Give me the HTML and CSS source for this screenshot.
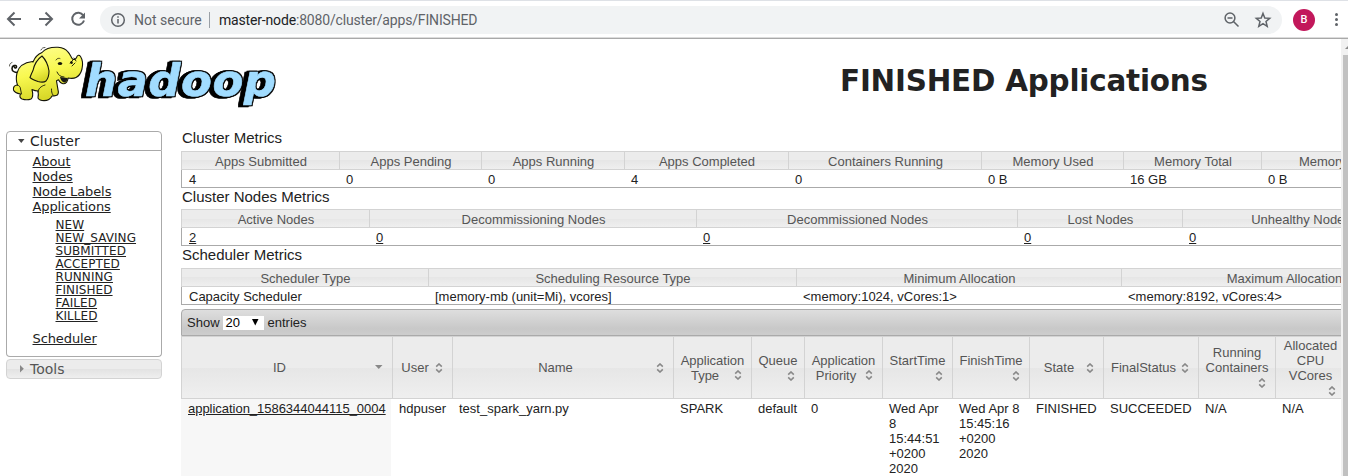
FILE: index.html
```html
<!DOCTYPE html>
<html lang="en">
<head>
<meta charset="utf-8">
<title>FINISHED Applications</title>
<link rel="stylesheet" href="styles.css">
</head>
<body>
<svg class="defs" width="0" height="0">
  <symbol id="sort" viewBox="0 0 8 10"><path d="M1.2 3.6 4 1l2.8 2.6M1.2 6.4 4 9l2.8-2.6" fill="none" stroke="#888" stroke-width="1.6"/></symbol>
</svg>
<div class="browser">
  <svg class="nav-icons" width="100" height="37" viewBox="0 0 100 37" fill="none" stroke="#5f6368" stroke-width="2">
    <path d="M21 18H8.500M14.500 11.500 8 18l6.500 6.500"/>
    <path d="M39 18h12.500M45.500 11.500 52 18l-6.500 6.500"/>
    <path d="M83.300 14.500A6 6 0 1 0 84 19.500"/>
    <path d="M85 11.500v6h-6z" fill="#5f6368" stroke="none"/>
  </svg>
  <div class="omnibox">
    <svg width="16" height="16" viewBox="0 0 16 16" fill="none" stroke="#5f6368" stroke-width="1.500"><circle cx="8" cy="8" r="6.300"/><path d="M8 7v4.500M8 4.200v1.600"/></svg>
    <span class="secure">Not secure</span>
    <span class="bar"></span>
    <span class="url"><b>master-node</b>:8080/cluster/apps/FINISHED</span>
    <svg class="tools" width="56" height="20" viewBox="0 0 56 20" fill="none" stroke="#5f6368" stroke-width="1.500">
      <circle cx="7" cy="8" r="4.900"/><path d="M4.500 8h5M10.500 11.500l5 5" />
      <path d="m40 3.400 1.800 4.600 4.900.3-3.700 3.200 1.200 4.900-4.200-2.700-4.200 2.700 1.200-4.900-3.700-3.200 4.900-.3z"/>
    </svg>
  </div>
  <span class="avatar">B</span>
  <span class="menu"><i></i><i></i><i></i></span>
</div>
<div class="viewport">
  <div class="page">
    <header class="top">
      <svg class="logo" width="290" height="80" viewBox="0 38 290 80">
        <defs>
          <linearGradient id="skin" x1="0" y1="0" x2=".3" y2="1"><stop offset="0" stop-color="#ffff98"/><stop offset=".55" stop-color="#f8f850"/><stop offset="1" stop-color="#d8d828"/></linearGradient>
          <filter id="extrude" filterUnits="userSpaceOnUse" x="70" y="50" width="220" height="65" color-interpolation-filters="sRGB">
            <feMorphology in="SourceAlpha" operator="dilate" radius="1" result="edge"/>
            <feOffset in="edge" dx="-2" dy="0" result="back1"/>
            <feOffset in="edge" dx="-4" dy="1" result="back2"/>
            <feMerge><feMergeNode in="back2"/><feMergeNode in="back1"/><feMergeNode in="edge"/><feMergeNode in="SourceGraphic"/></feMerge>
          </filter>
        </defs>
        <text class="word" x="85" y="96" textLength="191" filter="url(#extrude)">hadoop</text>
        <g stroke="#15150a" stroke-width="1.100" fill="url(#skin)" stroke-linejoin="round" stroke-linecap="round">
          <path d="M17.500 72.500c-3 0-5.500-1.500-5.500-4 0-3 4-4 4.500-2 .3 1.500-1.500 2-2 .8" fill="none" stroke-width="1.600"/>
          <path d="M33 62C35 57 38 54 42 52.500 46 48 52 47 58 47.300c5 .5 8 2 10 4.700 2 2 3 5 4.500 7 1.500 1 3 .5 4-1.500 1-3 3-2.500 4-1 2 3 2.500 8 1.500 12.500-1 4-3 7-6 8.500-2 1-5 1-8 .5 0 3-2 6-5 5.800-2-.3-3.500-2-4.500-4l-2 1 1.500 9c1 3 0 5.500-2 5.700-2 .5-3 .5-4 .5-2 4-6 5-10 4.500-2-.5-4-1-4-3 .5-2 .5-4 0-6.500-2 0-4-.5-6-1.500 1 4 1 8-1 9.500-2.500 1-6 1-9 0-2-1-2.500-3-1.500-5-3-.5-6-1.500-7-4-.5-3 1-5 4-5-1.500-4-1.500-8-.5-12 1.500-6 7-10.500 15.500-11.500z"/>
          <path d="M42 56c3 3 6 8 7 15 0 4-.5 7-3 10-2 1.500-6 1-8 .5-3-1-6-2-8-4 1-3 2-5 3-7 1-5 4-11 9-14.500z"/>
          <path d="M38 92c0-3 3-6 7-7M17 85c2 0 3.500 2 3.500 4l1 5M53 95c-1.500-2-1.500-4-1.500-6M70 63l3-3M72 66l3-3M74 58l2 3M57 72c1 3 4 5 7 5" fill="none" stroke-width=".9"/>
          <path d="M60 77c2 0 5 1 7.500 1 0 2-1 4.500-3.500 4.500-2-.5-3.500-3-4-5.500z" fill="#171718" stroke="none"/>
          <ellipse cx="60" cy="63.500" rx="2.200" ry="1.500" fill="#15150a" stroke="none"/><ellipse cx="71.500" cy="62.500" rx="1.300" ry="1.600" fill="#15150a" stroke="none"/>
          <path d="M56 60c1-2 3-2 4-1.500M9.500 66c0-2 1-3 2.500-3.500M41 50c1-2 2-2.500 4-2.500" fill="none" stroke-width=".7"/>
        </g>
      </svg>
      <h1>FINISHED Applications</h1>
    </header>
    <div class="columns">
      <nav class="side">
        <div class="acc-head open"><svg width="8" height="5" viewBox="0 0 8 5"><path d="M1 0h6.500L4.250 4z" fill="#454545"/></svg>Cluster</div>
        <div class="acc-body">
          <a>About</a><a>Nodes</a><a>Node Labels</a><a>Applications</a>
          <div class="sub"><a>NEW</a><a>NEW_SAVING</a><a>SUBMITTED</a><a>ACCEPTED</a><a>RUNNING</a><a>FINISHED</a><a>FAILED</a><a>KILLED</a></div>
          <a>Scheduler</a>
        </div>
        <div class="acc-head closed"><svg width="8" height="8" viewBox="0 0 8 8"><path d="M3 0v7.500L6.800 3.750z" fill="#888"/></svg>Tools</div>
      </nav>
      <main class="main">
        <h3>Cluster Metrics</h3>
        <div class="metrics m1">
          <div class="th">Apps Submitted</div><div class="th">Apps Pending</div><div class="th">Apps Running</div><div class="th">Apps Completed</div><div class="th">Containers Running</div><div class="th">Memory Used</div><div class="th">Memory Total</div><div class="th">Memory Reserved</div>
          <div class="td">4</div><div class="td">0</div><div class="td">0</div><div class="td">4</div><div class="td">0</div><div class="td">0 B</div><div class="td">16 GB</div><div class="td">0 B</div>
        </div>
        <h3>Cluster Nodes Metrics</h3>
        <div class="metrics m2">
          <div class="th">Active Nodes</div><div class="th">Decommissioning Nodes</div><div class="th">Decommissioned Nodes</div><div class="th">Lost Nodes</div><div class="th">Unhealthy Nodes</div>
          <div class="td"><a>2</a></div><div class="td"><a>0</a></div><div class="td"><a>0</a></div><div class="td"><a>0</a></div><div class="td"><a>0</a></div>
        </div>
        <h3>Scheduler Metrics</h3>
        <div class="metrics m3">
          <div class="th">Scheduler Type</div><div class="th">Scheduling Resource Type</div><div class="th">Minimum Allocation</div><div class="th">Maximum Allocation</div>
          <div class="td">Capacity Scheduler</div><div class="td">[memory-mb (unit=Mi), vcores]</div><div class="td">&lt;memory:1024, vCores:1&gt;</div><div class="td">&lt;memory:8192, vCores:4&gt;</div>
        </div>
        <div class="length">Show <span class="select">20<svg width="7" height="7" viewBox="0 0 7 7"><path d="M0 0h6.500L3.250 6.500z"/></svg></span> entries</div>
        <div class="apps">
          <div class="th side-sort"><span>ID</span><svg width="8" height="5" viewBox="0 0 8 5"><path d="M0 0h7.500L3.750 4z" fill="#888"/></svg></div>
          <div class="th side-sort"><span>User</span><svg class="s"><use href="#sort"/></svg></div>
          <div class="th side-sort"><span>Name</span><svg class="s"><use href="#sort"/></svg></div>
          <div class="th two"><span>Application</span><div class="side-sort"><span>Type</span><svg class="s"><use href="#sort"/></svg></div></div>
          <div class="th below"><span>Queue</span><svg class="s"><use href="#sort"/></svg></div>
          <div class="th two"><span>Application</span><div class="side-sort"><span>Priority</span><svg class="s"><use href="#sort"/></svg></div></div>
          <div class="th below"><span>StartTime</span><svg class="s"><use href="#sort"/></svg></div>
          <div class="th below"><span>FinishTime</span><svg class="s"><use href="#sort"/></svg></div>
          <div class="th side-sort"><span>State</span><svg class="s"><use href="#sort"/></svg></div>
          <div class="th side-sort"><span>FinalStatus</span><svg class="s"><use href="#sort"/></svg></div>
          <div class="th below"><span>Running<br>Containers</span><svg class="s"><use href="#sort"/></svg></div>
          <div class="th below"><span>Allocated<br>CPU<br>VCores</span><svg class="s"><use href="#sort"/></svg></div>
          <div class="td sorted"><a>application_1586344044115_0004</a></div>
          <div class="td">hdpuser</div><div class="td">test_spark_yarn.py</div><div class="td">SPARK</div><div class="td">default</div><div class="td">0</div>
          <div class="td">Wed Apr<br>8<br>15:44:51<br>+0200<br>2020</div><div class="td">Wed Apr 8<br>15:45:16<br>+0200<br>2020</div>
          <div class="td">FINISHED</div><div class="td">SUCCEEDED</div><div class="td">N/A</div><div class="td">N/A</div>
        </div>
      </main>
    </div>
  </div>
  <div class="scrollbar"><svg width="7" height="16" viewBox="0 0 7 16"><path d="M7 7v3H4z" fill="#8a8a8a"/></svg><div class="thumb"></div></div>
</div>
</body>
</html>
```
FILE: styles.css
```css
* { box-sizing: border-box; }
body { margin: 0; width: 1348px; height: 476px; overflow: hidden; background: #fff; color: #222; font: 13px/15px "Liberation Sans", Arial, sans-serif; display: flex; flex-direction: column; }
.defs { display: none; }
svg { flex: none; }
a { text-decoration: underline; text-underline-offset: 1px; }

.browser { height: 39px; flex: none; display: flex; align-items: center; border-top: 1px solid #dee1e6; border-bottom: 1px solid #a9a9a9; box-shadow: inset 0 -1px #dcdcdc; }
.omnibox { width: 1182px; height: 28px; border-radius: 14px; background: #f1f3f4; display: flex; align-items: center; padding-left: 10px; font: 14px/20px Roboto, sans-serif; color: #5f6368; }
.secure { margin-left: 8px; width: 67px; white-space: nowrap; }
.bar { width: 1px; height: 16px; background: #9aa0a6; margin: 0 9px 0 8px; }
.url { letter-spacing: -.17px; white-space: nowrap; }
.url b { font-weight: 400; color: #202124; }
.tools { margin-left: auto; margin-right: 3px; }
.avatar { width: 22px; height: 22px; border-radius: 50%; background: #c2185b; color: #fff; margin-left: 11px; display: flex; align-items: center; justify-content: center; font: 500 11px Roboto, sans-serif; }
.menu { margin-left: 20px; display: grid; gap: 2px; }
.menu i { width: 3px; height: 3px; border-radius: 50%; background: #5f6368; }

.viewport { flex: 1; min-height: 0; display: flex; }
.page { width: 1341px; overflow: hidden; }
.scrollbar { width: 7px; background: #f1f1f1; display: flex; flex-direction: column; }
.thumb { flex: 1; margin-left: 2px; background: #c1c1c1; }

.top { height: 92px; display: flex; align-items: flex-start; }
.logo { margin-top: -1px; }
.word { font: italic bold 45px "DejaVu Sans", sans-serif; fill: #a1dcff; stroke: #a1dcff; stroke-width: .6px; }
h1 { margin: 23px 0 0 550px; font: bold 29.4px/38px "DejaVu Sans", sans-serif; white-space: nowrap; letter-spacing: -.2px; }

.columns { display: flex; }
.side { width: 156px; margin-left: 6px; font-family: "DejaVu Sans", sans-serif; flex: none; }
.acc-head { height: 20px; border: 1px solid #aaa; border-radius: 4px 4px 0 0; display: flex; align-items: center; gap: 5px; padding-left: 10px; font-size: 14px; color: #212121; }
.acc-head.closed { border-color: #d3d3d3; border-radius: 4px; margin-top: 2px; color: #555; background: linear-gradient(#ececec 50%, #e2e2e2 50%, #efefef); }
.acc-body { height: 206px; border: 1px solid #aaa; border-top: 0; border-radius: 0 0 4px 4px; padding: 3px 0 0 25.500px; }
.acc-body a { display: block; height: 15px; line-height: 15px; letter-spacing: -.1px; }
.acc-body .sub { padding: 5px 0 8px 23px; }
.acc-body .sub a { height: 13px; line-height: 13px; font-size: 12px; letter-spacing: .08px; }

.main { margin-left: 19px; width: 1270px; flex: none; }
h3 { margin: 0; font-size: 15px; font-weight: 400; line-height: 16px; height: 21px; padding: 1px 0 0 1px; }
.main > h3:first-child { height: 20px; line-height: 12px; }
.m2 + h3 { height: 22px; }
.metrics { display: grid; grid-template-rows: 19px 17px; white-space: nowrap; border-bottom: 1px solid #aaa; border-left: 1px solid #aaa; width: max-content; }
.m1 { grid-template-columns: 157px 142px 143px 164px 193px 142px 138px 180px; }
.m2 { grid-template-columns: 187px 327px 321px 165px 236px; }
.m3 { grid-template-columns: 246px 368px 325px 325px; }
.th { color: #555; border: 1px solid #d3d3d3; border-right: 0; text-align: center; background: linear-gradient(#ececec 50%, #e6e6e6 50%, #efefef); }
.metrics .th { line-height: 19px; padding-left: 1px; }
.metrics .td { padding-left: 7px; line-height: 19px; }
.metrics .th:first-child { margin-left: -1px; }

.length { margin-top: 4px; height: 27px; border: 1px solid #aaa; border-radius: 4px 0 0 0; background: linear-gradient(#dedede, #c8c8c8 75%, #cdcdcd); display: flex; align-items: center; padding-left: 5px; gap: 4px; }
.select { background: #fff; color: #000; width: 41px; height: 14px; display: flex; align-items: center; justify-content: space-between; padding: 0 5px 0 3px; margin-left: -1px; }
.apps { display: grid; grid-template-columns: 211px 60px 221px 78px 53px 78px 70px 77px 74px 95px 77px 70px; grid-template-rows: 63px 90px; }
.apps .th { display: flex; align-items: center; justify-content: center; }
.apps .td { padding: 2px 0 0 7px; white-space: nowrap; }
.apps .sorted { background: #f7f7f7; margin-right: 1px; letter-spacing: -.03px; }
.s { width: 8px; height: 10px; }
.side-sort { display: flex; align-items: center; align-self: stretch; padding-left: 2px; }
.side-sort svg { margin-right: 9px; }
.side-sort span { flex: 1; }
.apps .below, .apps .two { flex-direction: column; }
.below svg { align-self: flex-end; margin: 3px 9px 2px 0; }
```
